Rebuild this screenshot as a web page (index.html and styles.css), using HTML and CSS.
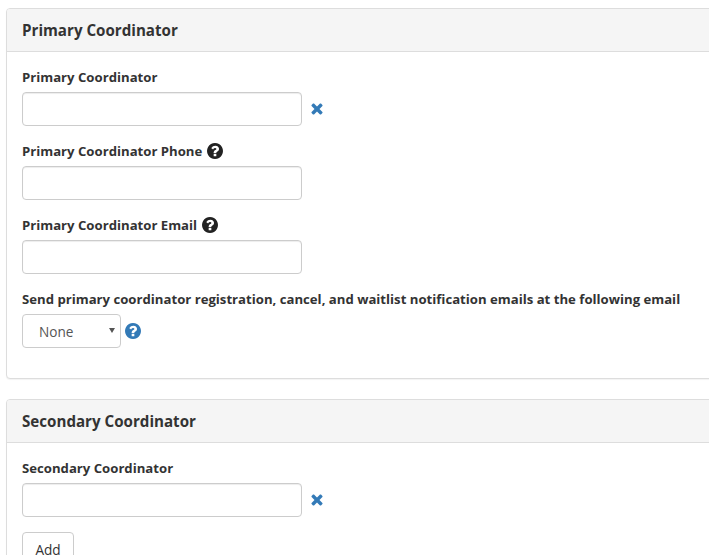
FILE: index.html
```html
<!DOCTYPE html>
<html lang="en">
<head>
    <meta charset="UTF-8">
    <title>Coordinators</title>
    <link rel="stylesheet" href="styles.css">
</head>
<body>
    <svg class="defs" width="0" height="0">
        <symbol id="icon-question" viewBox="128 128 1536 1536">
            <path d="M1024 1376v-192q0-14-9-23t-23-9H800q-14 0-23 9t-9 23v192q0 14 9 23t23 9h192q14 0 23-9t9-23zm256-672q0-88-55.500-163T1087 425t-170-41q-243 0-371 213-15 24 8 42l132 100q7 6 19 6 16 0 25-12 53-68 86-92 34-24 86-24 48 0 85.500 26t37.500 59q0 38-20 61t-68 45q-63 28-115.500 86.500T768 1020v36q0 14 9 23t23 9h192q14 0 23-9t9-23q0-19 21.500-49.500T1100 957q32-18 49-28.500t46-35 44.500-48 28-60.500 12.500-81zm384 192q0 209-103 385.500T1281 1561t-385 103-385-103-280-279T128 896t103-385.500T511 231t385-103 385 103 280 279.500T1664 896z"/>
        </symbol>
        <symbol id="icon-remove" viewBox="0 0 12 12">
            <path d="M3 .6 6 3.500 9 .6q.5-.4 1 0l1.400 1.400q.4.500 0 1L8.500 6l2.900 3q.4.500 0 1L10 11.400q-.5.4-1 0L6 8.500l-3 2.900q-.5.4-1 0L.6 10q-.4-.5 0-1l2.900-3L.6 3q-.4-.5 0-1L2 .6q.5-.4 1 0z"/>
        </symbol>
    </svg>

    <div class="panel">
        <div class="panel-heading">Primary Coordinator</div>
        <div class="panel-body">
            <div class="form-group">
                <label>Primary Coordinator</label>
                <div class="field-row">
                    <input type="text" class="form-control">
                    <svg class="icon-remove"><use href="#icon-remove"/></svg>
                </div>
            </div>
            <div class="form-group">
                <label>Primary Coordinator Phone <svg class="icon-help"><use href="#icon-question"/></svg></label>
                <input type="text" class="form-control">
            </div>
            <div class="form-group">
                <label>Primary Coordinator Email <svg class="icon-help"><use href="#icon-question"/></svg></label>
                <input type="text" class="form-control">
            </div>
            <div class="form-group">
                <label>Send primary coordinator registration, cancel, and waitlist notification emails at the following email</label>
                <div class="field-row select-row">
                    <div class="select-box">None<span class="caret"></span></div>
                    <svg class="icon-help blue"><use href="#icon-question"/></svg>
                </div>
            </div>
        </div>
    </div>

    <div class="panel">
        <div class="panel-heading">Secondary Coordinator</div>
        <div class="panel-body">
            <div class="form-group">
                <label>Secondary Coordinator</label>
                <div class="field-row">
                    <input type="text" class="form-control">
                    <svg class="icon-remove"><use href="#icon-remove"/></svg>
                </div>
            </div>
            <button class="btn">Add</button>
        </div>
    </div>
</body>
</html>
```

FILE: styles.css
```css
html, body {
    height: 100%;
    overflow: hidden;
}

body {
    margin: 0;
    padding: 8px 0 0 6px;
    font-family: "Open Sans", sans-serif;
    font-size: 14px;
    color: #333;
    background-color: #fff;
}

.defs {
    display: block;
    height: 0;
}

.panel {
    width: 780px;
    margin-bottom: 20px;
    border: 1px solid #ddd;
    border-radius: 4px;
    box-shadow: 0 1px 1px rgba(0,0,0,0.05);
    background-color: #fff;
}

.panel-heading {
    height: 42px;
    padding: 0 15px;
    line-height: 42px;
    font-size: 15.15px;
    font-weight: 700;
    color: #333;
    background-color: #f5f5f5;
    border-bottom: 1px solid #ddd;
    border-radius: 3px 3px 0 0;
}

.panel-body {
    padding: 15px;
}

.form-group {
    margin-bottom: 15px;
}

label {
    display: flex;
    align-items: center;
    gap: 4.5px;
    height: 20px;
    margin-bottom: 5px;
    font-weight: 700;
    font-size: 13.16px;
    white-space: nowrap;
}

.field-row {
    display: flex;
    align-items: center;
}

.form-control {
    display: block;
    box-sizing: border-box;
    width: 280px;
    height: 34px;
    margin: 0;
    padding: 6px 12px;
    border: 1px solid #ccc;
    border-radius: 4px;
    background-color: #fff;
    box-shadow: inset 0 1px 1px rgba(0,0,0,0.075);
}

.icon-remove {
    width: 12px;
    height: 12px;
    margin-left: 9px;
    fill: #337ab7;
}

.icon-help {
    width: 16px;
    height: 16px;
    fill: #222;
}

.icon-help.blue {
    margin-left: 4px;
    fill: #337ab7;
}

.select-box {
    position: relative;
    box-sizing: border-box;
    width: 99px;
    height: 34px;
    padding-left: 16px;
    line-height: 33px;
    font-size: 13.6px;
    color: #555;
    border: 1px solid #ccc;
    border-radius: 4px;
    background-color: #fff;
}

.caret {
    position: absolute;
    top: 13px;
    right: 5px;
    border-top: 5px solid #555;
    border-left: 3px solid transparent;
    border-right: 3px solid transparent;
}

.btn {
    display: block;
    box-sizing: border-box;
    width: 52px;
    height: 34px;
    margin: 0;
    padding: 0;
    font-family: inherit;
    font-size: 13.6px;
    color: #333;
    border: 1px solid #ccc;
    border-radius: 4px;
    background-color: #fff;
}
```
